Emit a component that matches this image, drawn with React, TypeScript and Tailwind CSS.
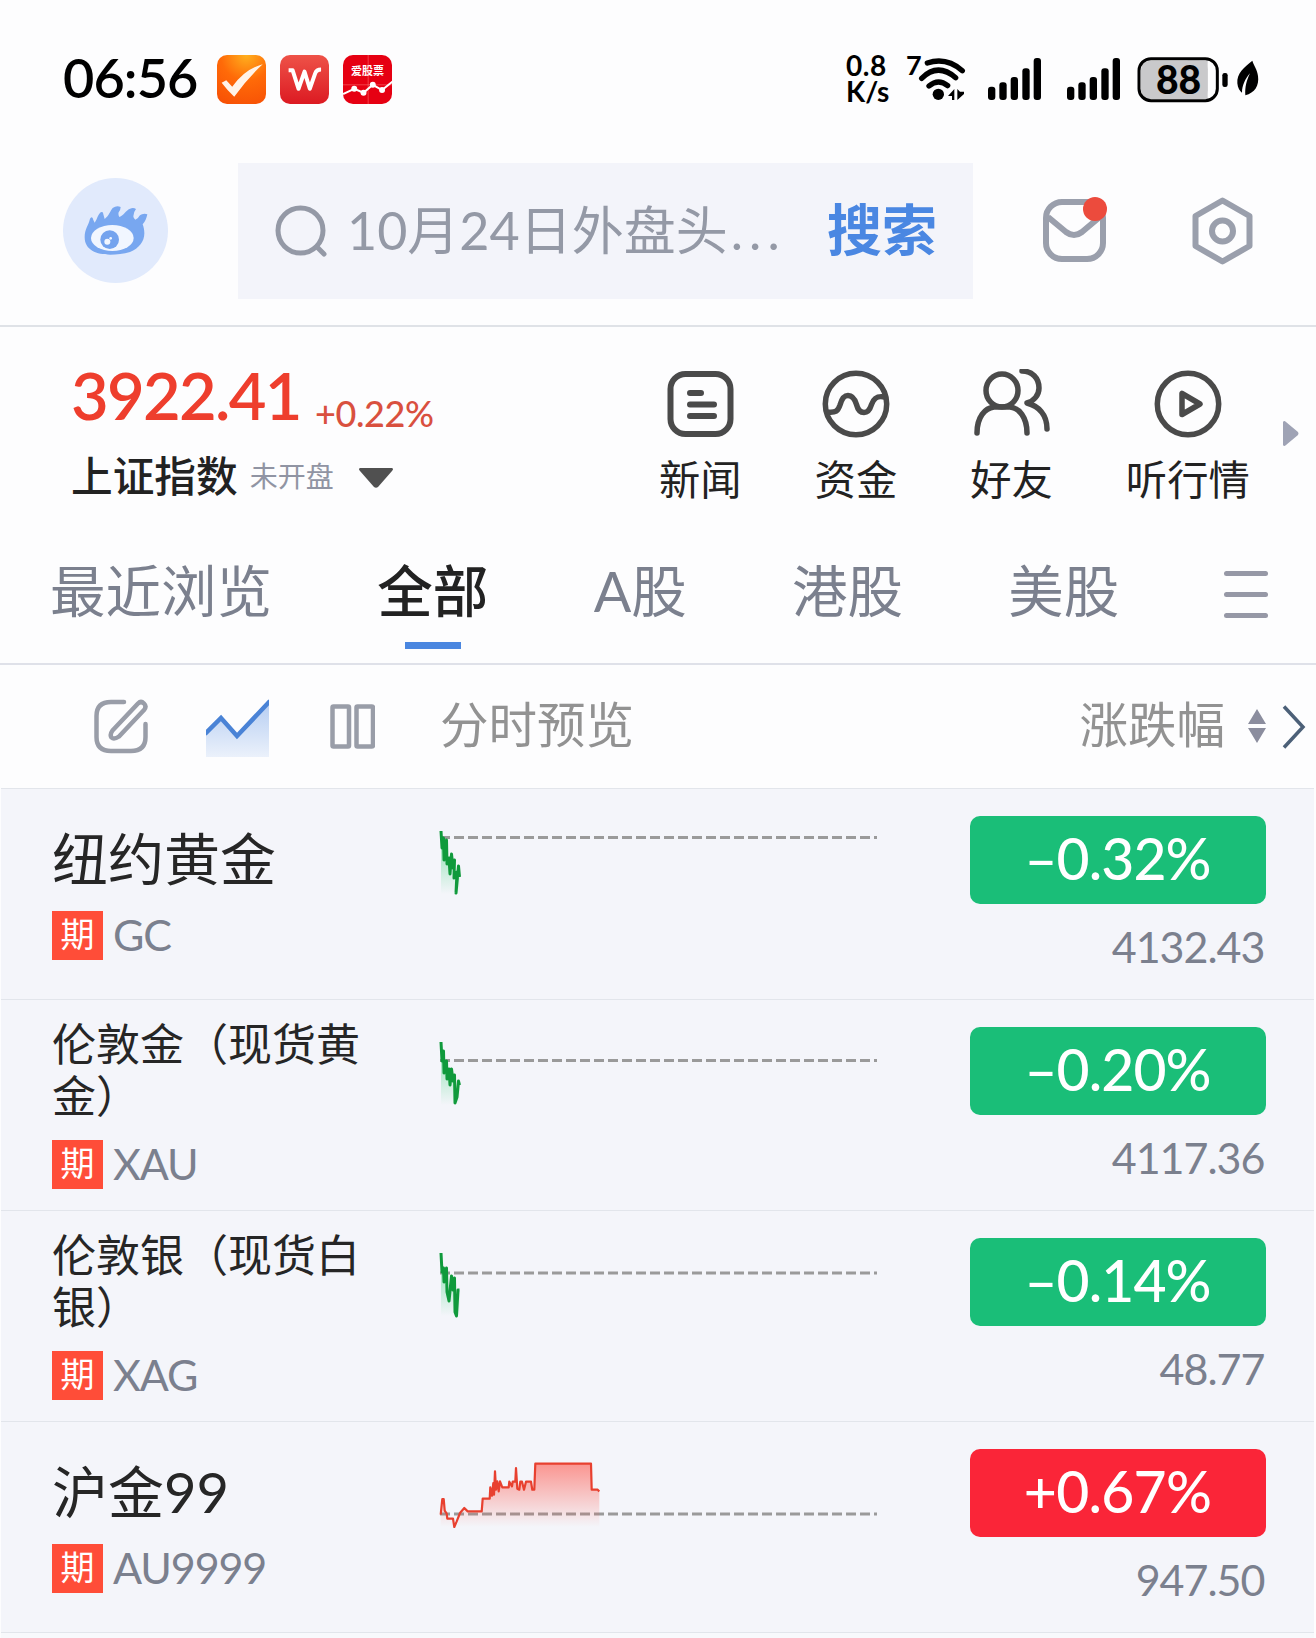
import type { ReactNode } from "react";

const NAV = [
  { label: "新闻", icon: <NewsIcon /> },
  { label: "资金", icon: <FundsIcon /> },
  { label: "好友", icon: <FriendsIcon /> },
  { label: "听行情", icon: <ListenIcon /> },
];

const GREEN_1 =
  "11,43 12,60 13.5,50 14,72 16.5,52 17,76 19,70 20,86 21.5,66 23,80 24.5,72 24,90 27,84 26,105 28.5,78 29.5,89";
const GREEN_2 =
  "11,43 12,62 13.5,52 14,74 16.5,62 17,80 19,70 20,86 21.5,70 23,82 24.5,76 25,104 27,98 28.5,82 29.5,86";
const GREEN_3 =
  "11,43 12,62 13.5,58 14,72 16.5,58 17,82 19,91 21.5,66 23,80 24.5,68 25,102 26.5,106 28,80 29.5,80";
const RED_4 =
  "10.7,93.7 12.3,78 13.7,78 14.7,89.7 16.7,92.7 17.3,97.7 23,97.7 24.3,106 26.7,100.4 30,92 34.3,87 37.7,90.4 51.7,90.4 52.7,77.7 59.7,77.7 60.3,66.4 62,74.7 63.3,62 64,73.7 65,50.4 66,68.7 67.3,60.4 68.7,70.4 70,60.4 72.3,66.4 78.7,66.4 79.3,60.7 82,65.4 82.7,60.7 85.3,60.7 86,47 87.3,67.7 89.3,68.7 90.3,60.7 92,60.7 94,68.7 96,60.7 101,60.7 102.3,68.7 104.3,68.7 105.3,42.7 161,42.7 161.7,68.7 167.7,68.7 169.3,70.4";

const STOCKS = [
  { name: "纽约黄金", code: "GC", change: "–0.32%", price: "4132.43", base: 49.5, points: GREEN_1, long: false },
  { name: "伦敦金（现货黄金）", code: "XAU", change: "–0.20%", price: "4117.36", base: 61.5, points: GREEN_2, long: true },
  { name: "伦敦银（现货白银）", code: "XAG", change: "–0.14%", price: "48.77", base: 63, points: GREEN_3, long: true },
  { name: "沪金99", code: "AU9999", change: "+0.67%", price: "947.50", base: 93, points: RED_4, long: false },
];

function NewsIcon() {
  return (
    <svg width="76" height="70" viewBox="0 0 76 70" fill="none" stroke="#4a4a4a" strokeWidth="6" strokeLinecap="round">
      <rect x="8.5" y="5" width="60" height="60" rx="15" />
      <path d="M28 24h11M28 35.5h24M28 47h24" />
    </svg>
  );
}

function FundsIcon() {
  return (
    <svg width="76" height="70" viewBox="0 0 76 70" fill="none" stroke="#4a4a4a" strokeWidth="5.5">
      <circle cx="38" cy="35" r="30.7" />
      <path d="M9 43c9 1 11-1 13-7 2-7 4-9.5 8-9.5 5 0 7 4 8.5 9 1.5 6 4 8 7.5 8 4 0 6-3 7.5-8 2-6 5-9 13-7.5" />
    </svg>
  );
}

function FriendsIcon() {
  return (
    <svg width="76" height="70" viewBox="0 0 76 70" fill="none" stroke="#4a4a4a" strokeWidth="5.5" strokeLinecap="round" strokeLinejoin="round">
      <ellipse cx="28" cy="21.5" rx="16" ry="16.5" />
      <path d="M3 64C3 48 11 39 20 38h16c9 1 17 10 17 26" />
      <path d="M48 2c10 0 17 7 17 17 0 7-5 13-12 15 11 3 20 11 20 26" />
    </svg>
  );
}

function ListenIcon() {
  return (
    <svg width="76" height="70" viewBox="0 0 76 70" fill="none" stroke="#4a4a4a" strokeWidth="5.5" strokeLinejoin="round">
      <circle cx="38" cy="35" r="30.7" />
      <path d="M32 24.5v21l18-10.5z" />
    </svg>
  );
}

function SignalIcon() {
  return (
    <svg className="w-[54px] h-[55px]" viewBox="0 60 162 165">
      <rect x="0" y="170" width="22" height="40" rx="9" />
      <rect x="34" y="157" width="22" height="53" rx="9" />
      <rect x="68" y="141" width="22" height="69" rx="9" />
      <rect x="103" y="115" width="22" height="95" rx="9" />
      <rect x="137" y="84" width="22" height="126" rx="9" />
    </svg>
  );
}

function StatusBar() {
  return (
    <div className="flex h-[163px] pt-[50px] text-black">
      <div className="w-[217px] pl-[63px] text-[54px] leading-[56px] font-semibold tracking-[-0.9px] whitespace-nowrap">06:56</div>
      <div className="flex gap-[14px] pt-[5px]">
        <div className="w-[49px] h-[49px] rounded-[10px] overflow-hidden bg-[radial-gradient(circle_at_60%_0%,#ffb01e_0,#ff6a08_45%,#f64d05_100%)]">
          <svg viewBox="0 0 148 148">
            <path d="M14 84l14-8 18 20q38-54 92-68-44 40-86 98-20-18-38-42z" fill="#fff3e8" />
          </svg>
        </div>
        <div className="w-[49px] h-[49px] rounded-[10px] bg-[linear-gradient(#ee5248,#dc1a22)]">
          <svg viewBox="0 0 148 148" fill="none" stroke="#fff" strokeWidth="12" strokeLinejoin="round">
            <path d="M26 46h12l18 56 18-52 16 52 16-46q4-12 18-12" />
          </svg>
        </div>
        <div className="relative w-[49px] h-[49px] rounded-[10px] overflow-hidden bg-[#e60012]">
          <div className="pt-2 text-center text-[11px] leading-[15px] font-bold text-white">爱股票</div>
          <svg className="absolute inset-0" viewBox="0 0 148 148" fill="none" stroke="#fff" strokeWidth="6">
            <path d="M76 0v148M0 90h148" stroke="#ff8080" strokeWidth="1.5" />
            <path d="M0 118l34-16 28 12 28-24 28 16 32-26" />
            <g fill="#fff" stroke="none">
              <circle cx="34" cy="102" r="9" />
              <circle cx="62" cy="114" r="9" />
              <circle cx="90" cy="90" r="9" />
              <circle cx="118" cy="106" r="9" />
            </g>
          </svg>
        </div>
      </div>
      <div className="ml-[454px] w-[60px] pt-[2px] text-[28px] leading-[26px] font-bold">
        <div className="tracking-[0.6px]">0.8</div>
        <div>K/s</div>
      </div>
      <div className="relative w-[82px]">
        <span className="absolute left-0 -top-px text-[27px] leading-8 font-bold">7</span>
        <svg className="w-[62px] h-[55px]" viewBox="255 60 186 165" fill="none" stroke="#000" strokeWidth="16" strokeLinecap="round">
          <path d="M319 99Q376 80 424 122" />
          <path d="M302 145Q350 97 404 143" />
          <path d="M324 168Q352 144 380 167" />
          <circle cx="352" cy="193" r="17" fill="#000" stroke="none" />
          <path d="M381 198l19-21v33h-7v-12zM409 177v33l20-18v-7h-12z" fill="#000" stroke="none" />
        </svg>
      </div>
      <SignalIcon />
      <div className="w-[25px]" />
      <SignalIcon />
      <div className="relative ml-4 w-[92px]">
        <svg className="w-[92px] h-[55px]" viewBox="948 60 276 165">
          <rect x="960" y="92" width="200" height="115" rx="26" fill="#c9c9cb" />
          <rect x="1100" y="92" width="60" height="115" fill="#c9c9cb" />
          <rect x="954" y="86" width="235" height="126" rx="36" fill="none" stroke="#000" strokeWidth="9" />
          <rect x="1204" y="129" width="16" height="42" rx="7" />
        </svg>
        <span className="absolute left-0 top-px w-[83px] text-center text-[39px] leading-[57px] font-black">88</span>
      </div>
      <svg className="ml-[7px] w-[24px] h-[55px]" viewBox="1244 60 72 165">
        <path d="M1293 92C1268 112 1246 130 1248 160c1 14 8 24 14 28C1262 166 1272 146 1286 130 1276 150 1270 172 1272 196 1300 188 1314 168 1310 138 1308 118 1298 108 1293 92z" />
      </svg>
    </div>
  );
}

function Header() {
  return (
    <header className="flex h-[164px] border-b-2 border-[#dfe2e7] pl-[63px]">
      <div className="mt-[15px] w-[105px] h-[105px] rounded-full bg-[#e1eafc]">
        <svg viewBox="69 84 315 315">
          <path
            d="M134 262C134 236 146 226 150 206q4-8 8-2 2 8 6 14C172 208 172 196 182 187q8-3 8 6l4 14C208 196 210 184 218 174q12-9 24-3 0 8-6 16-2 8 2 14C252 196 256 182 270 176q10-5 18 1-8 10-8 22 0 6 6 10C296 206 296 196 306 193q8-4 16 0-4 20-14 30C322 262 306 290 270 306 210 322 134 318 134 262z"
            fill="#78a7f0"
          />
          <ellipse cx="217" cy="264" rx="64" ry="39" fill="#f1f6ff" />
          <circle cx="209" cy="269" r="28" fill="#74a3ee" />
          <circle cx="202" cy="275" r="9" fill="#f1f6ff" />
          <circle cx="212" cy="265" r="4" fill="#f1f6ff" />
        </svg>
      </div>
      <div className="ml-[70px] flex w-[735px] h-[136px] items-center bg-[#f3f4fa] pl-[37px]">
        <svg width="54" height="54" viewBox="0 0 54 54" fill="none" stroke="#9499a6" strokeWidth="5" strokeLinecap="round">
          <circle cx="25.5" cy="26.5" r="22.5" />
          <path d="M42 43l7 7" />
        </svg>
        <div className="ml-[18px] w-[480px] text-[52px] leading-none text-[#9499a6] whitespace-nowrap -mt-[3px]">
          10月24日外盘头<span className="ml-[3px] tracking-[6.2px]">...</span>
        </div>
        <div className="text-[55px] leading-none font-bold text-[#4a87e2] whitespace-nowrap -mt-[3px]">搜索</div>
      </div>
      <div className="relative ml-[70px] mt-[36px] w-[63px] h-[63px]">
        <svg viewBox="0 0 63 63" fill="none" stroke="#9a9fac" strokeWidth="6">
          <rect x="3" y="3" width="57" height="57" rx="16" />
          <path d="M5 18l18 15q8 6 16 0l19-16" />
        </svg>
        <span className="absolute left-[40px] -top-[2px] w-6 h-6 rounded-full bg-[#ec4b3d]" />
      </div>
      <svg className="ml-[86px] mt-[33px] w-[61px] h-[70px]" viewBox="0 0 61 70" fill="none" stroke="#9a9fac" strokeWidth="6" strokeLinejoin="round">
        <path d="M30.5 4.5l27 15.5v30l-27 15.5-27-15.5v-30z" />
        <circle cx="30.5" cy="35" r="10.5" />
      </svg>
    </header>
  );
}

function IndexBar() {
  return (
    <section className="flex h-[203px] pl-[71px]">
      <div className="w-[588px]">
        <div className="flex items-baseline pt-[30px] whitespace-nowrap">
          <span className="w-[244px] text-[65px] leading-[76px] font-semibold tracking-[-1.7px] text-[#ee3e2d]">3922.41</span>
          <span className="relative top-[7px] text-[36px] leading-none font-medium tracking-[-0.4px] text-[#d9503f]">+0.22%</span>
        </div>
        <div className="mt-[21px] flex items-center whitespace-nowrap">
          <span className="text-[41.7px] leading-[44px] font-medium text-[#222]">上证指数</span>
          <span className="ml-[12px] text-[28px] leading-[44px] text-[#9094a3]">未开盘</span>
          <svg className="ml-[24px] mt-1" width="36" height="22" viewBox="0 0 36 22">
            <path d="M2 1h32q2 1 0 3L20 20q-2 1.5-4 0L2 4q-2-2 0-3z" fill="#505050" />
          </svg>
        </div>
      </div>
      <div className="flex gap-[73px] pt-[42px]">
        {NAV.map((item) => (
          <div key={item.label} className="flex flex-col items-center">
            {item.icon}
            <span className="mt-[18px] text-[41.3px] leading-[44px] text-[#222] whitespace-nowrap">{item.label}</span>
          </div>
        ))}
      </div>
      <svg className="ml-auto mr-[17px] mt-[93px]" width="17" height="27" viewBox="0 0 17 27">
        <path d="M1 2q1-2 3 0l12 10q1 1.5 0 3L4 25q-2 2-3 0z" fill="#9fa3b5" />
      </svg>
    </section>
  );
}

function Tab({ children, active }: { children: ReactNode; active?: boolean }) {
  return (
    <div className={active ? "relative font-medium text-[#222]" : "text-[#7b808e]"}>
      {children}
      {active && <span className="absolute left-1/2 -translate-x-1/2 top-[81px] w-14 h-[7px] bg-[#4a86e0]" />}
    </div>
  );
}

function Tabs() {
  return (
    <nav className="flex h-[135px] border-b-2 border-[#dfe1e9] pl-[50px] pt-[31px] text-[55.5px] leading-[60px] whitespace-nowrap">
      <div className="flex w-[1174px] gap-[105.3px]">
        <Tab>最近浏览</Tab>
        <Tab active>全部</Tab>
        <Tab>A股</Tab>
        <Tab>港股</Tab>
        <Tab>美股</Tab>
      </div>
      <div className="mt-[10px] flex w-11 flex-col gap-4">
        <span className="h-[5px] rounded-full bg-[#9698a6]" />
        <span className="h-[5px] rounded-full bg-[#9698a6]" />
        <span className="h-[5px] rounded-full bg-[#9698a6]" />
      </div>
    </nav>
  );
}

function Toolbar() {
  return (
    <div className="flex h-[123px] pl-[94px] pt-[33px] text-[48.5px] leading-[53px] text-[#929292] whitespace-nowrap">
      <svg className="w-[55px] h-[56px]" viewBox="0 0 55 56" fill="none" stroke="#999da8" strokeWidth="4.5" strokeLinecap="round" strokeLinejoin="round">
        <path d="M30 4H17Q2.5 4 2.5 18v21q0 14 14.5 14h20q14.5 0 14.5-14V26" />
        <path d="M44 5.5q3-3 6 0t0 6.5L25 38.5q-5 3.5-7.5 1-2-3 1-7z" />
      </svg>
      <svg className="ml-[57px] w-[63px] h-[60px]" viewBox="0 0 63 60" fill="none">
        <defs>
          <linearGradient id="area" x1="0" y1="0" x2="0" y2="1">
            <stop offset="0" stopColor="#4a86e0" stopOpacity=".4" />
            <stop offset="1" stopColor="#4a86e0" stopOpacity=".1" />
          </linearGradient>
        </defs>
        <path d="M0 35l15-15 16 18L63 4v55H0z" fill="url(#area)" />
        <path d="M-1 36l16-16 16 18L64 3" stroke="#4a83d6" strokeWidth="4.5" />
      </svg>
      <svg className="ml-[61px] mt-[6px] w-[45px] h-[45px]" viewBox="0 0 45 45" fill="none" stroke="#999da8" strokeWidth="4.5">
        <rect x="2.5" y="2.5" width="16.5" height="40" rx="1" />
        <rect x="26.5" y="2.5" width="16.5" height="40" rx="1" />
      </svg>
      <span className="ml-[65px]">分时预览</span>
      <span className="ml-auto">涨跌幅</span>
      <svg className="ml-[23px] mt-[11px]" width="18" height="34" viewBox="0 0 18 34" fill="#8b8d9e">
        <path d="M9 0l9 15H0zM9 34l9-15H0z" />
      </svg>
      <svg className="ml-[16px] mr-[10px] mt-[7px]" width="24" height="44" viewBox="0 0 24 44" fill="none" stroke="#4c6078" strokeWidth="3.5">
        <path d="M2 1.5l19 20.5L2 42.5" />
      </svg>
    </div>
  );
}

function Sparkline({ points, base, up, id }: { points: string; base: number; up: boolean; id: string }) {
  const coords = points.split(" ");
  const first = coords[0].split(",")[0];
  const last = coords[coords.length - 1].split(",")[0];
  return (
    <svg className="-mt-px w-[450px] h-[150px] shrink-0" viewBox="0 0 450 150" fill="none">
      <defs>
        <linearGradient id={id} gradientUnits="userSpaceOnUse" x1="0" y1="42" x2="0" y2="106">
          <stop offset="0" stopColor={up ? "#ff5448" : "#2fd070"} stopOpacity=".6" />
          <stop offset="1" stopColor={up ? "#ff5448" : "#2fd070"} stopOpacity="0" />
        </linearGradient>
      </defs>
      <path d={`M10 ${base}H447`} stroke="#9a9a9a" strokeWidth="3" strokeDasharray="10 4" />
      <polygon points={`${first},106 ${points} ${last},106`} fill={`url(#${id})`} />
      <polyline points={points} stroke={up ? "#e8402f" : "#109a3c"} strokeWidth={up ? 2.2 : 3} strokeLinejoin="round" />
    </svg>
  );
}

function StockRow({ stock }: { stock: (typeof STOCKS)[number] }) {
  const up = stock.change.startsWith("+");
  return (
    <div className="ml-px mr-[2px] flex h-[211px] border-t border-[#e2e5eb] bg-[#f4f5fa]">
      <div className="w-[429px] pl-[51px]">
        {stock.long ? (
          <div className="h-[140px] w-[312px] pt-[18px] text-[44px] leading-[52px] text-[#262626]">{stock.name}</div>
        ) : (
          <div className="h-[122px] pt-[40px] text-[56px] leading-[60px] text-[#262626] whitespace-nowrap">{stock.name}</div>
        )}
        <div className="flex items-center">
          <span className="flex w-[51px] h-[49px] items-center justify-center bg-[#ff4d38] text-[34px] leading-none text-white">
            <span className="-mt-[3px]">期</span>
          </span>
          <span className="-mt-[3px] ml-[10px] text-[43px] leading-[49px] tracking-[-1.1px] text-[#7b808e]">{stock.code}</span>
        </div>
      </div>
      <Sparkline points={stock.points} base={stock.base} up={up} id={`fill-${stock.code}`} />
      <div className="ml-[89.500px] w-[296px] pt-[27px]">
        <div
          className={
            up
              ? "h-[88px] rounded-[10px] bg-[#fa2538] text-center text-[57px] leading-[84px] font-medium tracking-[-0.7px] text-white"
              : "h-[88px] rounded-[10px] bg-[#1abe78] text-center text-[57px] leading-[84px] font-medium tracking-[-0.9px] text-white"
          }
        >
          {stock.change}
        </div>
        <div className="pt-[16px] pr-px text-right text-[43px] leading-[54px] tracking-[-1px] text-[#7b808e]">{stock.price}</div>
      </div>
    </div>
  );
}

export default function App() {
  return (
    <div className="w-[1316px] h-[1638px] overflow-hidden bg-[#fdfdfe] font-['Lato','Noto_Sans_CJK_SC',sans-serif]">
      <StatusBar />
      <Header />
      <IndexBar />
      <Tabs />
      <Toolbar />
      {STOCKS.map((stock) => (
        <StockRow key={stock.code} stock={stock} />
      ))}
      <div className="ml-px mr-[2px] h-2 border-t border-[#e2e5eb] bg-[#f8f9fc]" />
    </div>
  );
}
